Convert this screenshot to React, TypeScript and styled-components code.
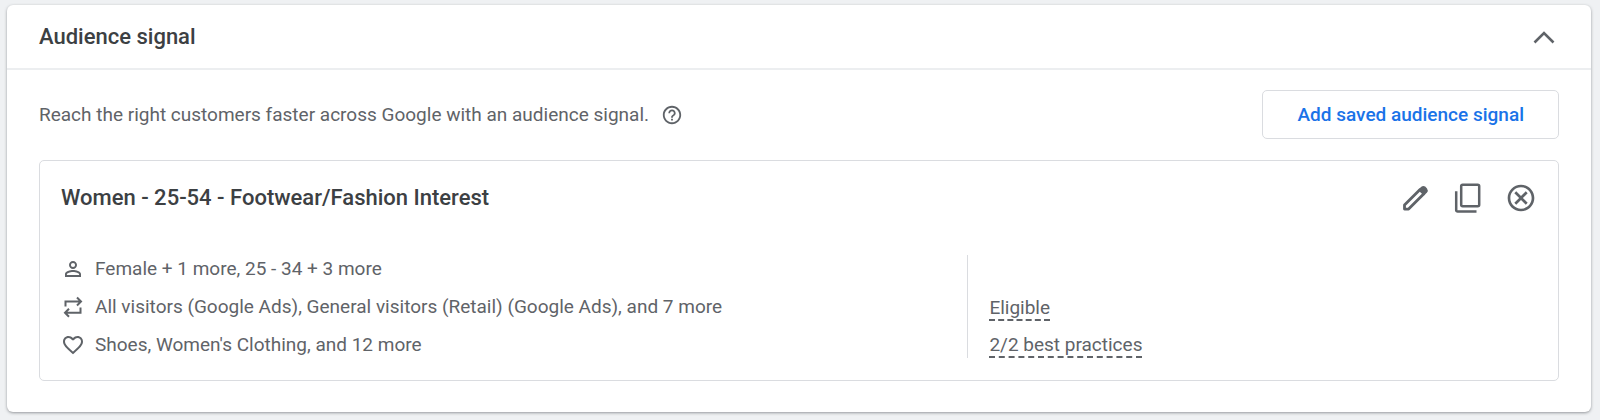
import React, { useState } from "react";
import styled, { createGlobalStyle } from "styled-components";
import { MdOutlineCancel, MdHelpOutline, MdPersonOutline, MdFavoriteBorder } from "react-icons/md";

const GlobalStyle = createGlobalStyle`
  * { box-sizing: border-box; }
  body {
    margin: 0;
    background: #eff1f3;
    color: #5f6368;
    font-family: Roboto, "Liberation Sans", sans-serif;
    font-size: 19px;
    line-height: 27px;
  }
`;

const Page = styled.main`
  padding: 5px 9px 8px 7px;
`;

const Panel = styled.section`
  background: #fff;
  border-radius: 6px;
  box-shadow: 0 1px 3px rgba(60, 64, 67, 0.5);
`;

const PanelHeader = styled.header`
  display: flex;
  align-items: center;
  justify-content: space-between;
  height: 65px;
  padding: 0 31px 0 32px;
  border-bottom: 2px solid #eceef0;
`;

const Title = styled.h2`
  margin: 0;
  color: #3c4043;
  font-size: 22px;
  font-weight: 500;
  line-height: 32px;
`;

const IconButton = styled.button`
  display: flex;
  padding: 0;
  border: 0;
  background: none;
  color: #5f6368;
  cursor: pointer;
`;

const PanelBody = styled.div`
  padding: 20px 32px 31px 32px;
`;

const IntroRow = styled.div`
  display: flex;
  align-items: center;
  justify-content: space-between;
  gap: 24px;
  margin-bottom: 21px;
`;

const Intro = styled.div`
  display: flex;
  align-items: center;
  gap: 12px;
`;

const Text = styled.p`
  margin: 0;
`;

const OutlineButton = styled.button`
  height: 49px;
  padding: 0 34px;
  border: 1px solid #dadce0;
  border-radius: 5px;
  background: #fff;
  color: #1a73e8;
  font: 500 19px/24px Roboto, "Liberation Sans", sans-serif;
  cursor: pointer;
`;

const SignalCard = styled.article`
  padding: 21px 21px 22px;
  border: 1px solid #dadce0;
  border-radius: 5px;
`;

const SignalHeader = styled.div`
  display: flex;
  align-items: center;
  justify-content: space-between;
  margin-bottom: 41px;
`;

const Actions = styled.div`
  display: flex;
  gap: 21px;
`;

const SignalBody = styled.div`
  display: grid;
  grid-template-columns: 907fr 570fr;
`;

const Details = styled.ul`
  display: grid;
  gap: 11px;
  margin: 0;
  padding: 0;
  list-style: none;
`;

const Detail = styled.li`
  display: flex;
  align-items: center;
  gap: 10px;
`;

const Status = styled.div`
  display: flex;
  flex-direction: column;
  align-items: flex-start;
  justify-content: flex-end;
  gap: 13px;
  padding-left: 21px;
  border-left: 1px solid #dadce0;
`;

const StatusLink = styled.a`
  border-bottom: 2px dashed #5f6368;
  color: inherit;
  line-height: 22px;
  text-decoration: none;
`;

const ChevronIcon = () => (
  <svg width="32" height="32" viewBox="0 0 32 32" fill="none" stroke="currentColor" strokeWidth="2.600" aria-hidden="true">
    <path d="M6.500 21.500 16 12 25.500 21.500" />
  </svg>
);

const PencilIcon = () => (
  <svg width="32" height="32" viewBox="0 0 32 32" fill="none" aria-hidden="true">
    <path d="M5.500 23 20.800 7.700 24.900 11.800 9.600 27.100H5.500Z" stroke="currentColor" strokeWidth="2.800" strokeLinejoin="round" />
    <path d="M19.500 7.500 22.300 4.700Q24.300 3.200 26.200 4.600L28 6.400Q29.500 8.400 28 10.400L25.300 13.200Z" fill="currentColor" />
  </svg>
);

const CopyIcon = () => (
  <svg width="32" height="32" viewBox="0 0 32 32" fill="none" stroke="currentColor" strokeWidth="2.500" aria-hidden="true">
    <rect x="9.200" y="2.800" width="18" height="21.500" rx="1.500" />
    <path d="M4.200 9.200V28.200a1.400 1.400 0 0 0 1.400 1.400H24.500" />
  </svg>
);

const RepeatIcon = () => (
  <svg width="24" height="24" viewBox="0 0 24 24" fill="none" stroke="currentColor" strokeWidth="2" aria-hidden="true">
    <path d="M4.500 11.500V6.500H19.500M16 2.500 20 6.500 16 10.500M19.500 12.500V17.700H4.500M8 13.700 4 17.700 8 21.700" />
  </svg>
);

const details = [
  { icon: <MdPersonOutline size={24} />, text: "Female + 1 more, 25 - 34 + 3 more" },
  { icon: <RepeatIcon />, text: "All visitors (Google Ads), General visitors (Retail) (Google Ads), and 7 more" },
  { icon: <MdFavoriteBorder size={24} />, text: "Shoes, Women's Clothing, and 12 more" },
];

export default function App() {
  const [open, setOpen] = useState(true);
  return (
    <>
      <GlobalStyle />
      <Page>
        <Panel>
          <PanelHeader>
            <Title>Audience signal</Title>
            <IconButton aria-label="Collapse" aria-expanded={open} onClick={() => setOpen(!open)}>
              <ChevronIcon />
            </IconButton>
          </PanelHeader>
          {open && (
            <PanelBody>
              <IntroRow>
                <Intro>
                  <Text>Reach the right customers faster across Google with an audience signal.</Text>
                  <IconButton aria-label="Help"><MdHelpOutline size={22} /></IconButton>
                </Intro>
                <OutlineButton>Add saved audience signal</OutlineButton>
              </IntroRow>
              <SignalCard>
                <SignalHeader>
                  <Title as="h3">Women - 25-54 - Footwear/Fashion Interest</Title>
                  <Actions>
                    <IconButton aria-label="Edit"><PencilIcon /></IconButton>
                    <IconButton aria-label="Copy"><CopyIcon /></IconButton>
                    <IconButton aria-label="Remove"><MdOutlineCancel size={32} /></IconButton>
                  </Actions>
                </SignalHeader>
                <SignalBody>
                  <Details>
                    {details.map(({ icon, text }) => (
                      <Detail key={text}>{icon}{text}</Detail>
                    ))}
                  </Details>
                  <Status>
                    <StatusLink href="#eligible">Eligible</StatusLink>
                    <StatusLink href="#practices">2/2 best practices</StatusLink>
                  </Status>
                </SignalBody>
              </SignalCard>
            </PanelBody>
          )}
        </Panel>
      </Page>
    </>
  );
}
